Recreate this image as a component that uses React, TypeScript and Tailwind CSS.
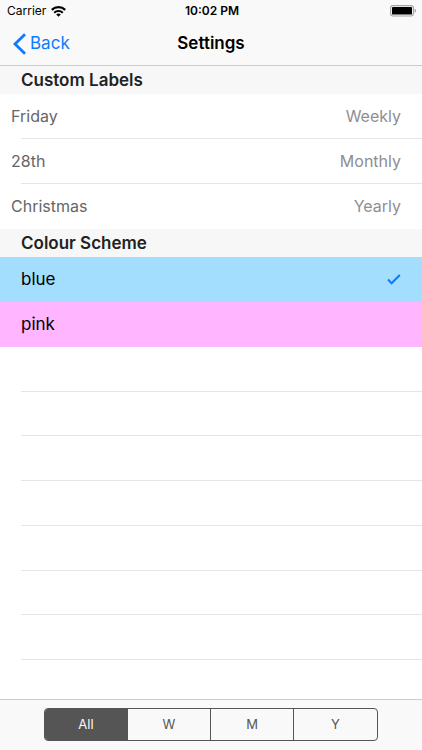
import { useState } from "react";

const customLabels = [
  { id: "weekly", period: "Weekly", value: "Friday" },
  { id: "monthly", period: "Monthly", value: "28th" },
  { id: "yearly", period: "Yearly", value: "Christmas" },
];

const schemes = [
  { name: "blue", row: "bg-[#a3deff]" },
  { name: "pink", row: "bg-[#ffb5ff]" },
];

const filters = ["All", "W", "M", "Y"];

function StatusBar() {
  return (
    <div className="grid h-[22px] grid-cols-3 items-center pl-[7px] pr-[5px] text-xs text-black">
      <div className="flex items-center gap-[5px]">
        <span>Carrier</span>
        <svg width="15" height="11" viewBox="0 0 15 11" aria-hidden="true">
          <path d="M0.8 3.9a9.6 9.6 0 0 1 13.4 0" fill="none" stroke="#000" strokeWidth="2.2" />
          <path d="M3.2 6.7a6.2 6.2 0 0 1 8.6 0" fill="none" stroke="#000" strokeWidth="2" />
          <path d="M7.5 10.8 5.2 8.5a3.3 3.3 0 0 1 4.6 0Z" fill="#000" />
        </svg>
      </div>
      <span className="whitespace-nowrap text-center font-semibold">10:02 PM</span>
      <svg className="justify-self-end" width="27" height="12" viewBox="0 0 27 12" aria-hidden="true">
        <rect x="0.6" y="0.6" width="22.8" height="10.4" rx="2.4" fill="none" stroke="#a3a3a3" strokeWidth="1.1" />
        <rect x="2" y="2" width="20" height="7.6" rx="0.9" fill="#000" />
        <path d="M24.5 3.8c2 .6 2 3.4 0 4Z" fill="#a3a3a3" />
      </svg>
    </div>
  );
}

function SectionHeader({ children }: { children: string }) {
  return (
    <h2 className="flex h-7 items-center bg-[#f7f7f7] pl-[21px] pt-0.5 text-[17px] font-semibold text-[#222222]">
      {children}
    </h2>
  );
}

export default function App() {
  const [scheme, setScheme] = useState("blue");
  const [filter, setFilter] = useState("All");

  return (
    <div className="flex min-h-screen flex-col bg-white font-['Inter','Liberation_Sans',sans-serif]">
      <header className="border-b border-[#cccccc] bg-[#f9f9f9]">
        <StatusBar />
        <nav className="grid h-[43px] grid-cols-[1fr_auto_1fr] items-center px-[13px] text-[17px]">
          <button type="button" className="flex items-center gap-1 justify-self-start text-[#0b7bff]">
            <svg width="13" height="22" viewBox="0 0 13 22" aria-hidden="true">
              <path d="M12 1.2 2 11l10 9.8" fill="none" stroke="currentColor" strokeWidth="2.8" />
            </svg>
            Back
          </button>
          <h1 className="font-semibold text-black">Settings</h1>
        </nav>
      </header>

      <main className="flex grow flex-col">
        <section>
          <SectionHeader>Custom Labels</SectionHeader>
          {customLabels.map((item, i) => (
            <div key={item.id}>
              <div className="flex h-11 items-center pl-[11px] pr-[21px] text-base">
                <input
                  id={item.id}
                  defaultValue={item.value}
                  className="min-w-0 grow bg-transparent text-[#666666] outline-none"
                />
                <label htmlFor={item.id} className="text-[#8e8e93]">
                  {item.period}
                </label>
              </div>
              <div className={`ml-[21px] h-px ${i < customLabels.length - 1 ? "bg-[#e5e5e7]" : "bg-white"}`} />
            </div>
          ))}
        </section>

        <section>
          <SectionHeader>Colour Scheme</SectionHeader>
          {schemes.map((item) => (
            <button
              key={item.name}
              type="button"
              aria-pressed={scheme === item.name}
              onClick={() => setScheme(item.name)}
              className={`flex h-[45px] w-full items-center justify-between px-[21px] text-[17px] text-black ${item.row}`}
            >
              {item.name}
              {scheme === item.name && (
                <svg width="14" height="11" viewBox="0 0 14 11" aria-hidden="true">
                  <path d="M1 5.6 4.6 9.2 12.8 1.1" fill="none" stroke="#0b7bff" strokeWidth="2.1" />
                </svg>
              )}
            </button>
          ))}
        </section>

        <div className="flex grow flex-col" aria-hidden="true">
          {[1, 2, 3, 4, 5, 6, 7].map((n) => (
            <div key={n} className="ml-[21px] min-h-10 flex-[9] border-b border-[#e5e5e7]" />
          ))}
          <div className="flex-[8]" />
        </div>
      </main>

      <footer className="border-t border-[#cccccc] bg-[#f9f9f9] px-11 pb-[9px] pt-2">
        <div className="grid h-[33px] grid-cols-4 divide-x divide-[#555555] overflow-hidden rounded border border-[#555555]">
          {filters.map((item) => (
            <button
              key={item}
              type="button"
              aria-pressed={filter === item}
              onClick={() => setFilter(item)}
              className={`text-[13px] ${filter === item ? "bg-[#555555] text-[#f9f9f9]" : "text-[#555555]"}`}
            >
              {item}
            </button>
          ))}
        </div>
      </footer>
    </div>
  );
}
